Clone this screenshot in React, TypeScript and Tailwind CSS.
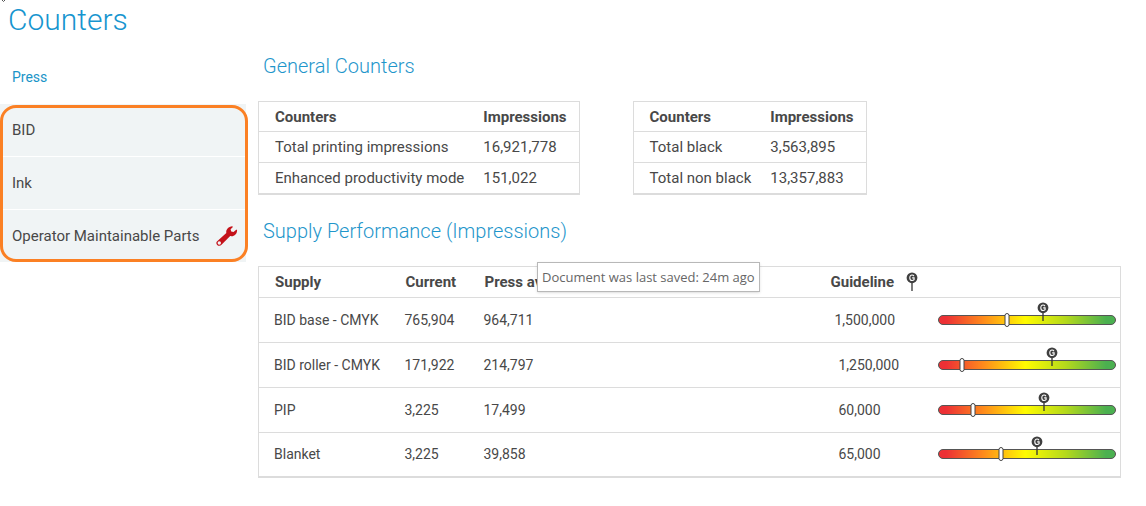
import clsx from "clsx";

const navItems = [
  { label: "BID", alert: false },
  { label: "Ink", alert: false },
  { label: "Operator Maintainable Parts", alert: true },
];

const printingCounters = [
  { name: "Total printing impressions", value: "16,921,778" },
  { name: "Enhanced productivity mode", value: "151,022" },
];

const blackCounters = [
  { name: "Total black", value: "3,563,895" },
  { name: "Total non black", value: "13,357,883" },
];

// current / target are positions on the gauge, in percent
const supplies = [
  { name: "BID base - CMYK", used: "765,904", average: "964,711", guideline: "1,500,000", current: 39, target: 59 },
  { name: "BID roller - CMYK", used: "171,922", average: "214,797", guideline: "1,250,000", current: 13.5, target: 64.5 },
  { name: "PIP", used: "3,225", average: "17,499", guideline: "60,000", current: 19.5, target: 60 },
  { name: "Blanket", used: "3,225", average: "39,858", guideline: "65,000", current: 35.5, target: 56 },
];

export default function App() {
  return (
    <div className="min-h-screen bg-white font-[Roboto,sans-serif] text-[15px] leading-5 text-[#484848]">
      <header className="relative h-[50px] px-2">
        <svg className="absolute left-0 top-0 h-[3px] w-2" viewBox="0 0 8 3" fill="none" aria-hidden="true">
          <path d="M2 0 L3.5 1.5 L5 0" stroke="#555" />
        </svg>
        <h1 className="text-[30px] font-light leading-10 text-[#1795cf]">Counters</h1>
      </header>

      <div className="flex items-start">
        <Sidebar />

        <main className="ml-3 mr-[25px] min-w-0 flex-1">
          <section>
            <SectionTitle>General Counters</SectionTitle>
            <div className="flex flex-wrap items-start gap-x-[53px] gap-y-6">
              <CounterTable rows={printingCounters} />
              <CounterTable rows={blackCounters} />
            </div>
          </section>

          <section className="mt-5">
            <SectionTitle>Supply Performance (Impressions)</SectionTitle>
            <div className="relative">
              <SupplyTable />
              <div
                role="tooltip"
                className="absolute -top-1 left-[279px] whitespace-nowrap border border-[#b8b8b8] bg-white px-1 py-1 font-['Open_Sans',sans-serif] text-[13px] leading-5 text-[#666] shadow-sm"
              >
                Document was last saved: 24m ago
              </div>
            </div>
          </section>
        </main>
      </div>
    </div>
  );
}

function Sidebar() {
  return (
    <nav className="w-[246px] shrink-0">
      <a href="#press" className="flex h-[54px] items-center px-3 text-sm text-[#1a94c8]">
        Press
      </a>
      <div className="relative">
        <ul className="divide-y divide-white bg-[#f0f4f5]">
          {navItems.map((item) => (
            <li key={item.label}>
              <a href="#" className="flex h-[52px] items-center justify-between pl-3 pr-2">
                {item.label}
                {item.alert && <WrenchIcon />}
              </a>
            </li>
          ))}
        </ul>
        <div className="pointer-events-none absolute -right-0.5 bottom-0 left-0 top-px rounded-2xl border-[3px] border-[#fb8024]" />
      </div>
    </nav>
  );
}

function SectionTitle({ children }: { children: string }) {
  return <h2 className="h-[51px] px-[5px] pt-0.5 text-xl font-light leading-7 text-[#1f96cb]">{children}</h2>;
}

function CounterTable({ rows }: { rows: { name: string; value: string }[] }) {
  return (
    <table className="border-collapse border border-b-2 border-[#dcdcdc] text-left">
      <thead>
        <tr className="h-[30px] border-b border-[#dcdcdc]">
          <th className="pl-4 pr-[7px] font-bold">Counters</th>
          <th className="px-3 font-bold">Impressions</th>
        </tr>
      </thead>
      <tbody>
        {rows.map((row) => (
          <tr key={row.name} className="h-[31px] border-b border-[#dcdcdc] last:border-b-0">
            <td className="pl-4 pr-[7px]">{row.name}</td>
            <td className="px-3">{row.value}</td>
          </tr>
        ))}
      </tbody>
    </table>
  );
}

function SupplyTable() {
  return (
    <table className="w-full table-fixed border-collapse border border-b-2 border-[#dcdcdc] text-left">
      <colgroup>
        <col className="w-[131px]" />
        <col className="w-[79px]" />
        <col />
        <col className="w-[123px]" />
        <col className="w-[183px]" />
      </colgroup>
      <thead>
        <tr className="h-[31px] border-b border-[#dcdcdc]">
          <th className="pl-4 font-bold">Supply</th>
          <th className="pl-4 font-bold">Current</th>
          <th className="pl-4 font-bold">Press average lifespan</th>
          <th className="pl-4 font-bold">
            <div className="flex items-center gap-3">
              Guideline
              <GuidelinePin />
            </div>
          </th>
          <th aria-label="Gauge" />
        </tr>
      </thead>
      <tbody className="text-sm">
        {supplies.map((supply, i) => (
          <tr key={supply.name} className="h-[45px] border-b border-[#dcdcdc] last:border-b-0">
            <td className="whitespace-nowrap pl-[15px]">{supply.name}</td>
            <td className="pl-[15px]">{supply.used}</td>
            <td className="pl-[15px]">{supply.average}</td>
            <td className={clsx(i === 0 ? "pl-5" : "pl-6")}>{supply.guideline}</td>
            <td className="pr-1">
              <Gauge current={supply.current} target={supply.target} />
            </td>
          </tr>
        ))}
      </tbody>
    </table>
  );
}

function Gauge({ current, target }: { current: number; target: number }) {
  return (
    <div className="relative h-[10px] rounded-full border border-[#555] bg-[linear-gradient(90deg,#ec3035_4%,#ff8a1c_25%,#fffb00_49%,#b4d91c_72%,#4bb050_95%)]">
      <div
        className="absolute -top-[3px] h-[14px] w-[5px] -translate-x-1/2 rounded-sm border border-[#444] bg-white"
        style={{ left: `${current}%` }}
      />
      <div className="absolute bottom-[3px] -translate-x-1/2" style={{ left: `${target}%` }}>
        <GuidelinePin />
      </div>
    </div>
  );
}

function GuidelinePin() {
  return (
    <svg className="block h-[19px] w-3 shrink-0" viewBox="0 0 12 19" fill="none" aria-hidden="true">
      <path d="M6 10V19" stroke="#333" strokeWidth="1.3" />
      <circle cx="6" cy="5.8" r="5.4" fill="#3f3f3f" />
      <path d="M8 4.2C7.5 3.3 6.8 3 6 3C4.7 3 3.8 4.1 3.8 5.7C3.8 7.4 4.7 8.5 6.1 8.5C7 8.5 7.7 8.1 8.1 7.6V5.9H6.2" stroke="#fff" strokeWidth="1.1" />
    </svg>
  );
}

function WrenchIcon() {
  return (
    <svg className="h-5 w-[22px] shrink-0" viewBox="0 0 22 20" aria-hidden="true">
      <path
        d="M1.2 15.2L10.3 7.1C9.8 3.9 12 0.9 16.3 0.3L16.9 1.1L14.6 3.3L15.2 5.6L17.5 6.1L20.5 3.6L21.1 4.2C21 8.2 18.1 10.8 14.2 10.1L5.5 18.7C4.4 20 2.4 20.1 1.2 18.9C0.1 17.8 0 16.3 1.2 15.2Z"
        fill="#c4121a"
      />
      <circle cx="3.3" cy="17" r="1.7" fill="#f0f4f5" />
    </svg>
  );
}
